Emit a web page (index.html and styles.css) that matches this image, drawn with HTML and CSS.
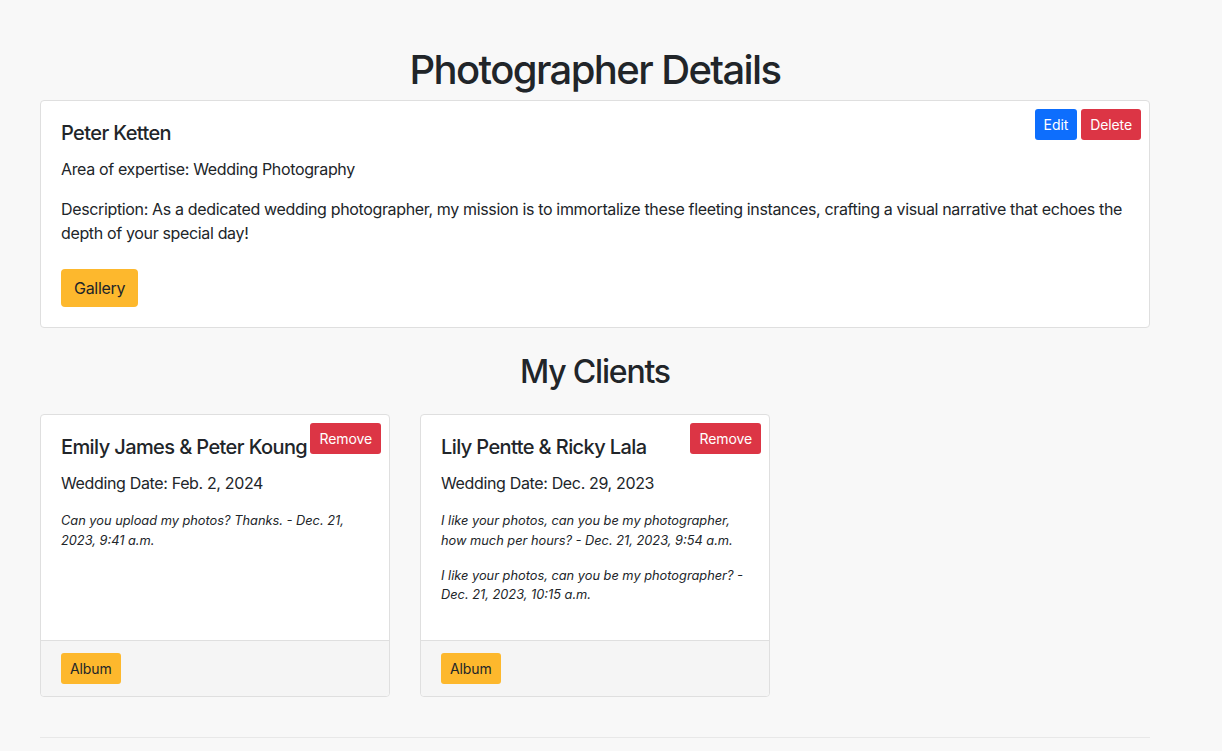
FILE: index.html
```html
<!DOCTYPE html>
<html lang="en">
<head>
<meta charset="utf-8">
<title>Photographer Details</title>
<link rel="stylesheet" href="styles.css">
</head>
<body>
<main class="container">
  <h1 class="page-title">Photographer Details</h1>
  <section class="card profile">
    <div class="card-body">
      <div class="actions">
        <button class="btn btn-sm btn-primary">Edit</button>
        <button class="btn btn-sm btn-danger">Delete</button>
      </div>
      <h5 class="card-title">Peter Ketten</h5>
      <p class="text">Area of expertise: Wedding Photography</p>
      <p class="text">Description: As a dedicated wedding photographer, my mission is to immortalize these fleeting instances, crafting a visual narrative that echoes the depth of your special day!</p>
      <div class="gallery-row"><button class="btn btn-warning">Gallery</button></div>
    </div>
  </section>

  <h2 class="section-title">My Clients</h2>
  <div class="clients">
    <article class="card client">
      <div class="card-body">
        <div class="actions"><button class="btn btn-sm btn-danger">Remove</button></div>
        <h5 class="card-title">Emily James &amp; Peter Koung</h5>
        <p class="date">Wedding Date: Feb. 2, 2024</p>
        <p class="comment">Can you upload my photos? Thanks. - Dec. 21, 2023, 9:41 a.m.</p>
      </div>
      <div class="card-footer"><button class="btn btn-sm btn-warning">Album</button></div>
    </article>
    <article class="card client">
      <div class="card-body">
        <div class="actions"><button class="btn btn-sm btn-danger">Remove</button></div>
        <h5 class="card-title">Lily Pentte &amp; Ricky Lala</h5>
        <p class="date">Wedding Date: Dec. 29, 2023</p>
        <p class="comment">I like your photos, can you be my photographer, how much per hours? - Dec. 21, 2023, 9:54 a.m.</p>
        <p class="comment">I like your photos, can you be my photographer? - Dec. 21, 2023, 10:15 a.m.</p>
      </div>
      <div class="card-footer"><button class="btn btn-sm btn-warning">Album</button></div>
    </article>
  </div>
  <hr class="rule">
</main>
</body>
</html>
```

FILE: styles.css
```css
* { box-sizing: border-box; }
html, body { margin: 0; padding: 0; }
body {
  background: #f8f8f8;
  color: #212529;
  font-family: "Inter", "Liberation Sans", sans-serif;
  font-size: 16px;
  line-height: 1.5;
  letter-spacing: -0.35px;
}
.container {
  width: 1110px;
  margin-left: 40px;
  padding-top: 46px;
}
.page-title {
  margin: 0 0 6px;
  font-size: 40px;
  font-weight: 500;
  line-height: 1.2;
  letter-spacing: -1.6px;
  text-align: center;
}
.section-title {
  margin: 25px 0 23px;
  font-size: 32px;
  font-weight: 500;
  line-height: 1.2;
  letter-spacing: -1.2px;
  text-align: center;
}
.card {
  position: relative;
  display: flex;
  flex-direction: column;
  background: #fff;
  border: 1px solid #dfdfdf;
  border-radius: 4px;
}
.card-body {
  flex: 1;
  padding: 20px;
}
.card-title {
  margin: 0 0 12px;
  font-size: 20px;
  font-weight: 500;
  line-height: 1.2;
  letter-spacing: -0.6px;
}
.text { margin: 0 0 16px; }
.gallery-row { padding-top: 8px; }
.actions {
  position: absolute;
  top: 8px;
  right: 8px;
  display: flex;
  gap: 4px;
}
.btn {
  font-family: inherit;
  letter-spacing: -0.3px;
  border: 1px solid transparent;
  border-radius: 4px;
  font-size: 16px;
  line-height: 1.5;
  padding: 6px 12px;
  color: #212529;
  cursor: pointer;
}
.btn-sm {
  font-size: 14px;
  letter-spacing: -0.1px;
  padding: 4px 8px;
  border-radius: 3px;
}
.btn-primary { background: #0d6efd; color: #fff; }
.btn-danger { background: #dc3545; color: #fff; }
.btn-warning { background: #fdb82d; color: #212529; }
.clients {
  display: flex;
  gap: 30px;
  align-items: stretch;
}
.client { width: 350px; }
.date {
  margin: 0 0 16px;
  font-size: 16px;
  line-height: 1.5;
}
.comment {
  margin: 0 0 16px;
  font-size: 12.8px;
  line-height: 1.5;
  letter-spacing: 0;
  font-style: italic;
}
.card-footer {
  padding: 12px 20px;
  background: #f5f5f5;
  border-top: 1px solid #dfdfdf;
  border-radius: 0 0 4px 4px;
}
.rule {
  margin: 40px 0 0;
  border: 0;
  border-top: 1px solid #e8e8e8;
}
```
